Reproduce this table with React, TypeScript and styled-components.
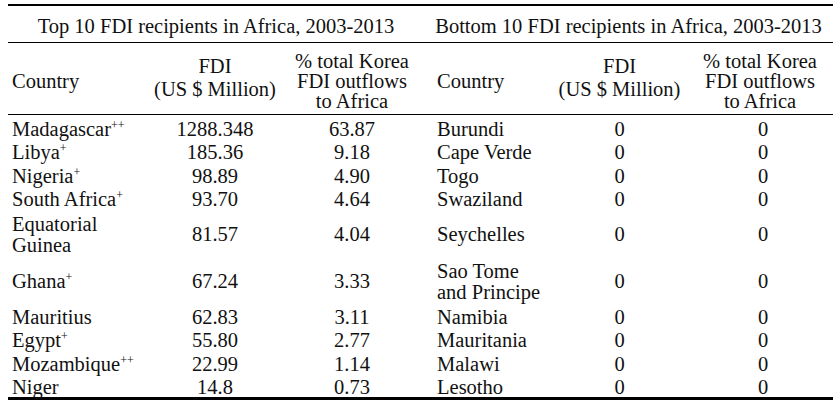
import React from "react";
import styled, { createGlobalStyle } from "styled-components";

const GlobalStyle = createGlobalStyle`
  body {
    margin: 0;
    background: #fff;
  }
`;

const Page = styled.div`
  padding: 4px 6px 0 8px;
  font-family: "Liberation Serif", "Times New Roman", serif;
  color: #111;
`;

const Table = styled.table`
  width: 825px;
  table-layout: fixed;
  border-collapse: collapse;
  border-top: 2px solid #000;
  border-bottom: 3px solid #000;
  font-size: 20.5px;
`;

const TitleRow = styled.tr`
  height: 37px;
  border-bottom: 1px solid #000;
`;

const TitleCell = styled.th`
  font-weight: normal;
  text-align: center;
  padding: 4px 0 0;
  line-height: 22px;
  white-space: nowrap;
`;

const HeadRow = styled.tr`
  height: 72px;
  border-bottom: 1px solid #000;
`;

const HeadCell = styled.th<{ $align?: "left" | "center"; $lh?: number; $pl?: number; $pt?: number }>`
  font-weight: normal;
  text-align: ${(p) => p.$align || "center"};
  vertical-align: middle;
  line-height: ${(p) => p.$lh || 20}px;
  padding: ${(p) => p.$pt ?? 6}px 0 0 ${(p) => p.$pl ?? 0}px;
  white-space: nowrap;
`;

const Row = styled.tr<{ $tall?: boolean }>`
  height: ${(p) => (p.$tall ? 47 : 23.5)}px;
`;

const Cell = styled.td<{ $align?: "left" | "center"; $pl?: number }>`
  text-align: ${(p) => p.$align || "center"};
  vertical-align: middle;
  line-height: 18.5px;
  padding: 5px 0 0 ${(p) => p.$pl ?? 0}px;
  white-space: nowrap;
`;

const Lines = styled.span`
  display: block;
  line-height: 21px;
`;

const Mark = styled.sup`
  font-size: 12px;
  line-height: 0;
  vertical-align: 7px;
`;

type Item = { country: React.ReactNode; fdi: string; pct: string; tall?: boolean };

const top: Item[] = [
  { country: <>Madagascar<Mark>++</Mark></>, fdi: "1288.348", pct: "63.87" },
  { country: <>Libya<Mark>+</Mark></>, fdi: "185.36", pct: "9.18" },
  { country: <>Nigeria<Mark>+</Mark></>, fdi: "98.89", pct: "4.90" },
  { country: <>South Africa<Mark>+</Mark></>, fdi: "93.70", pct: "4.64" },
  { country: <Lines>Equatorial<br />Guinea</Lines>, fdi: "81.57", pct: "4.04", tall: true },
  { country: <>Ghana<Mark>+</Mark></>, fdi: "67.24", pct: "3.33", tall: true },
  { country: "Mauritius", fdi: "62.83", pct: "3.11" },
  { country: <>Egypt<Mark>+</Mark></>, fdi: "55.80", pct: "2.77" },
  { country: <>Mozambique<Mark>++</Mark></>, fdi: "22.99", pct: "1.14" },
  { country: "Niger", fdi: "14.8", pct: "0.73" },
];

const bottom: React.ReactNode[] = [
  "Burundi",
  "Cape Verde",
  "Togo",
  "Swaziland",
  "Seychelles",
  <Lines>Sao Tome<br />and Principe</Lines>,
  "Namibia",
  "Mauritania",
  "Malawi",
  "Lesotho",
];

export default function App() {
  return (
    <Page>
      <GlobalStyle />
      <Table>
        <colgroup>
          <col style={{ width: 142 }} />
          <col style={{ width: 130 }} />
          <col style={{ width: 144 }} />
          <col style={{ width: 131 }} />
          <col style={{ width: 126 }} />
          <col style={{ width: 152 }} />
        </colgroup>
        <thead>
          <TitleRow>
            <TitleCell colSpan={3}>Top 10 FDI recipients in Africa, 2003-2013</TitleCell>
            <TitleCell colSpan={3}>Bottom 10 FDI recipients in Africa, 2003-2013</TitleCell>
          </TitleRow>
          <HeadRow>
            <HeadCell $align="left" $pl={4}>Country</HeadCell>
            <HeadCell $lh={23} $pt={0}>FDI<br />(US $ Million)</HeadCell>
            <HeadCell>% total Korea<br />FDI outflows<br />to Africa</HeadCell>
            <HeadCell $align="left" $pl={13}>Country</HeadCell>
            <HeadCell $lh={23} $pt={0} $pl={3}>FDI<br />(US $ Million)</HeadCell>
            <HeadCell $pl={6}>% total Korea<br />FDI outflows<br />to Africa</HeadCell>
          </HeadRow>
        </thead>
        <tbody>
          {top.map((t, i) => (
            <Row key={i} $tall={t.tall}>
              <Cell $align="left" $pl={4}>{t.country}</Cell>
              <Cell>{t.fdi}</Cell>
              <Cell>{t.pct}</Cell>
              <Cell $align="left" $pl={13}>{bottom[i]}</Cell>
              <Cell $pl={3}>0</Cell>
              <Cell $pl={12}>0</Cell>
            </Row>
          ))}
        </tbody>
      </Table>
    </Page>
  );
}
